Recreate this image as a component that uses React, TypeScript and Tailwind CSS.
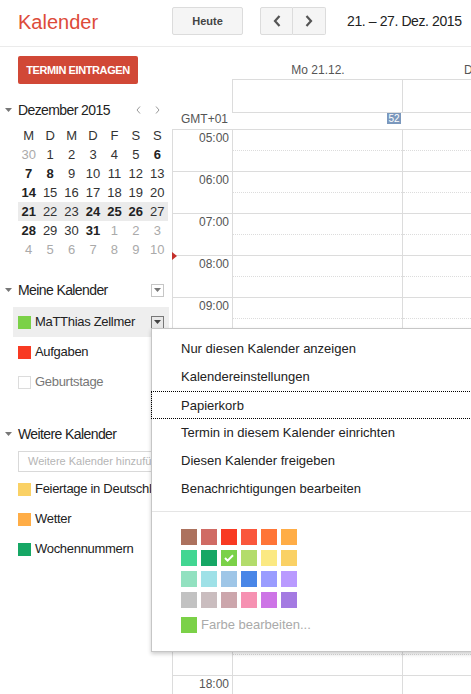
import React from "react";

const miniWeeks: [string, "n" | "b" | "g"][][] = [
  [["30", "g"], ["1", "n"], ["2", "n"], ["3", "n"], ["4", "n"], ["5", "n"], ["6", "b"]],
  [["7", "b"], ["8", "b"], ["9", "n"], ["10", "n"], ["11", "n"], ["12", "n"], ["13", "n"]],
  [["14", "b"], ["15", "n"], ["16", "n"], ["17", "n"], ["18", "n"], ["19", "n"], ["20", "n"]],
  [["21", "b"], ["22", "n"], ["23", "n"], ["24", "b"], ["25", "b"], ["26", "b"], ["27", "n"]],
  [["28", "b"], ["29", "n"], ["30", "n"], ["31", "b"], ["1", "g"], ["2", "g"], ["3", "g"]],
  [["4", "g"], ["5", "g"], ["6", "g"], ["7", "g"], ["8", "g"], ["9", "g"], ["10", "g"]],
];

const palette = [
  ["#ac725e", "#d06b64", "#f83a22", "#fa573c", "#ff7537", "#ffad46"],
  ["#42d692", "#16a765", "#7bd148", "#b3dc6c", "#fbe983", "#fad165"],
  ["#92e1c0", "#9fe1e7", "#9fc6e7", "#4986e7", "#9a9cff", "#b99aff"],
  ["#c2c2c2", "#cabdbf", "#cca6ac", "#f691b2", "#cd74e6", "#a47ae2"],
];

const hours = ["05", "06", "07", "08", "09", "10", "11", "12", "13", "14", "15", "16", "17", "18"];

const menuItems = [
  "Nur diesen Kalender anzeigen",
  "Kalendereinstellungen",
  "Papierkorb",
  "Termin in diesem Kalender einrichten",
  "Diesen Kalender freigeben",
  "Benachrichtigungen bearbeiten",
];

function Caret() {
  return (
    <svg width="7" height="4" viewBox="0 0 7 4" className="ml-[5px] mr-[6px]">
      <path d="M0 0h7L3.5 4z" fill="#777" />
    </svg>
  );
}

function DropBox({ active = false }: { active?: boolean }) {
  return (
    <div
      className={
        "flex h-[13px] w-[13px] items-center justify-center border " +
        (active ? "border-[#777] bg-[#e8e8e8]" : "border-[#c6c6c6] bg-white")
      }
    >
      <svg width="7" height="4" viewBox="0 0 7 4">
        <path d="M0 0h7L3.5 4z" fill={active ? "#444" : "#777"} />
      </svg>
    </div>
  );
}

function CalRow({
  color,
  label,
  active = false,
  muted = false,
  menu = false,
}: {
  color?: string;
  label: string;
  active?: boolean;
  muted?: boolean;
  menu?: boolean;
}) {
  return (
    <div
      className={
        "flex h-[30px] items-center whitespace-nowrap " +
        (active ? "ml-[13px] w-[156px] bg-[#eeeeee] pl-[5px]" : "pl-[18px]")
      }
    >
      <div
        className="h-[13px] w-[13px] shrink-0"
        style={color ? { backgroundColor: color } : { border: "1px solid #dcdcdc" }}
      />
      <span className={"ml-[4px] text-[13px] tracking-[-0.3px] " + (muted ? "text-[#777]" : "text-[#222]")}>
        {label}
      </span>
      {menu && (
        <div className="ml-auto mr-[5px]">
          <DropBox active />
        </div>
      )}
    </div>
  );
}

export default function App() {
  return (
    <div className="relative h-[694px] w-[471px] overflow-hidden bg-white font-['Liberation_Sans',Arial,sans-serif] text-[#222]">
      {/* top bar */}
      <div className="flex h-[47px] border-b border-[#ebebeb]">
        <div className="w-[172px] shrink-0 pl-[18px] pt-[10px] text-[20px] leading-[24px] text-[#dd4b39]">
          Kalender
        </div>
        <div className="flex items-start pt-[7px]">
          <div className="flex h-[28px] w-[71px] items-center justify-center rounded-[2px] border border-[#dcdcdc] bg-[#f5f5f5] text-[11px] font-bold text-[#444]">
            Heute
          </div>
          <div className="ml-[17px] flex h-[28px]">
            <div className="flex w-[33px] items-center justify-center rounded-l-[2px] border border-[#dcdcdc] bg-[#f5f5f5]">
              <svg width="8" height="12" viewBox="0 0 8 12">
                <path d="M6.5 1L2 6l4.5 5" fill="none" stroke="#555" strokeWidth="2.2" />
              </svg>
            </div>
            <div className="flex w-[33px] items-center justify-center rounded-r-[2px] border border-l-0 border-[#dcdcdc] bg-[#f5f5f5]">
              <svg width="8" height="12" viewBox="0 0 8 12">
                <path d="M1.5 1L6 6l-4.5 5" fill="none" stroke="#555" strokeWidth="2.2" />
              </svg>
            </div>
          </div>
          <div className="ml-[21px] whitespace-nowrap text-[14px] leading-[28px] tracking-[-0.4px] text-[#222]">
            21. – 27. Dez. 2015
          </div>
        </div>
      </div>

      <div className="flex">
        {/* sidebar */}
        <div className="w-[172px] shrink-0">
          <div className="ml-[18px] mt-[9px] flex h-[28px] w-[120px] items-center justify-center rounded-[2px] bg-[#d14836] text-[11px] font-bold tracking-[-0.4px] text-white">
            TERMIN EINTRAGEN
          </div>

          <div className="mt-[16px] flex h-[20px] items-center">
            <Caret />
            <span className="text-[14px] tracking-[-0.6px]">Dezember 2015</span>
            <svg width="5" height="8" viewBox="0 0 5 8" className="ml-auto">
              <path d="M4 0.5L1 4l3 3.5" fill="none" stroke="#999" strokeWidth="1" />
            </svg>
            <svg width="5" height="8" viewBox="0 0 5 8" className="ml-[14px] mr-[12px]">
              <path d="M1 0.5L4 4l-3 3.5" fill="none" stroke="#999" strokeWidth="1" />
            </svg>
          </div>

          <div className="ml-[18px] mt-[6px] w-[150px] text-[13px]">
            <div className="grid h-[19px] grid-cols-7 items-center text-center text-[#333]">
              {["M", "D", "M", "D", "F", "S", "S"].map((d, i) => (
                <div key={i}>{d}</div>
              ))}
            </div>
            {miniWeeks.map((w, wi) => (
              <div
                key={wi}
                className={"grid h-[19px] grid-cols-7 items-center text-center " + (wi === 3 ? "bg-[#ebebeb]" : "")}
              >
                {w.map(([n, t], di) => (
                  <div
                    key={di}
                    className={t === "b" ? "font-bold text-[#222]" : t === "g" ? "text-[#aaa]" : "text-[#333]"}
                  >
                    {n}
                  </div>
                ))}
              </div>
            ))}
          </div>

          <div className="mt-[21px] flex h-[20px] items-center">
            <Caret />
            <span className="text-[14px] tracking-[-0.6px]">Meine Kalender</span>
            <div className="ml-auto mr-[8px]">
              <DropBox />
            </div>
          </div>
          <div className="mt-[7px]">
            <CalRow color="#7bd148" label="MaTThias Zellmer" active menu />
            <CalRow color="#f83a22" label="Aufgaben" />
            <CalRow label="Geburtstage" muted />
          </div>

          <div className="mt-[27px] flex h-[20px] items-center">
            <Caret />
            <span className="text-[14px] tracking-[-0.6px]">Weitere Kalender</span>
          </div>
          <div className="ml-[18px] mt-[7px] flex h-[21px] w-[150px] items-center overflow-hidden whitespace-nowrap border border-[#d9d9d9] pl-[9px] text-[11px] text-[#b5b5b5]">
            Weitere Kalender hinzufügen
          </div>
          <div className="mt-[2px]">
            <CalRow color="#fad165" label="Feiertage in Deutschland" />
            <CalRow color="#ffad46" label="Wetter" />
            <CalRow color="#16a765" label="Wochennummern" />
          </div>
        </div>

        {/* main grid */}
        <div className="relative min-w-0 flex-1 overflow-hidden">
          <div className="flex h-[32px] items-start pt-[14px] text-[12px] text-[#555]">
            <div className="w-[61px] shrink-0" />
            <div className="w-[170px] shrink-0 text-center">Mo 21.12.</div>
            <div className="w-[170px] shrink-0 text-center">Di 22.12.</div>
          </div>
          <div className="flex h-[34px]">
            <div className="w-[60px] shrink-0" />
            <div className="flex flex-1 border-y border-l border-[#dcdcdc]">
              <div className="w-[170px] shrink-0 border-r border-[#dcdcdc]" />
              <div className="flex-1" />
            </div>
          </div>
          <div className="flex h-[16px]">
            <div className="w-[60px] shrink-0 pl-[9px] text-[12px] leading-[12px] text-[#555]">GMT+01</div>
            <div className="flex w-[170px] shrink-0 justify-end">
              <div className="mr-[1px] flex h-[11px] w-[14px] items-center justify-center bg-[#7b98bd] text-[10px] leading-none text-white">
                52
              </div>
            </div>
          </div>
          <div className="border-t border-[#dcdcdc]">
            {hours.map((h) => (
              <div key={h} className="flex h-[42px] border-b border-[#dcdcdc]">
                <div className="w-[61px] shrink-0 border-x border-[#dcdcdc] pr-[3px] pt-[1px] text-right text-[12px] leading-[14px] text-[#555]">
                  {h}:00
                </div>
                <div className="w-[170px] shrink-0 border-r border-[#dcdcdc]">
                  <div className="h-[21px] border-b border-dotted border-[#dcdcdc]" />
                </div>
                <div className="flex-1">
                  <div className="h-[21px] border-b border-dotted border-[#dcdcdc]" />
                </div>
              </div>
            ))}
          </div>
          <svg width="5" height="8" viewBox="0 0 5 8" className="absolute left-0 top-[205px]">
            <path d="M0 0l5 4-5 4z" fill="#c4302b" />
          </svg>
        </div>
      </div>

      {/* calendar context menu */}
      <div className="absolute left-[151px] top-[328px] w-[340px] border border-[#c6c6c6] bg-white pb-[18px] pt-[6px] shadow-[0_2px_4px_rgba(0,0,0,0.2)]">
        {menuItems.map((m) => (
          <div
            key={m}
            className={
              "h-[28px] whitespace-nowrap pl-[29px] text-[13px] leading-[28px] text-[#222] " +
              (m === "Papierkorb" ? "-ml-[1px] border border-dotted border-black pl-[29px] leading-[26px]" : "")
            }
          >
            {m}
          </div>
        ))}
        <div className="mt-[8px] border-t border-[#e5e5e5] pl-[29px] pt-[17px]">
          <div className="grid w-[116px] grid-cols-6 gap-x-[4px] gap-y-[5px]">
            {palette.flat().map((c) => (
              <div key={c} className="flex h-[16px] w-[16px] items-center justify-center" style={{ backgroundColor: c }}>
                {c === "#7bd148" && (
                  <svg width="10" height="8" viewBox="0 0 10 8">
                    <path d="M1 4l2.6 2.6L9 1.2" fill="none" stroke="white" strokeWidth="2" />
                  </svg>
                )}
              </div>
            ))}
          </div>
          <div className="mt-[9px] flex h-[16px] items-center">
            <div className="h-[16px] w-[16px] bg-[#7bd148]" />
            <span className="ml-[4px] text-[13px] text-[#aaa]">Farbe bearbeiten...</span>
          </div>
        </div>
      </div>
    </div>
  );
}
